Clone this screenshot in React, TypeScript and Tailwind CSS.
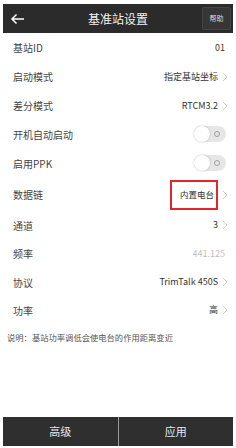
import type { ReactNode } from 'react';

const font = { fontFamily: '"Noto Sans CJK SC", "Noto Sans", sans-serif' };

function Chevron() {
  return (
    <svg width="7" height="10" viewBox="0 0 7 10" className="ml-[3px] shrink-0">
      <path d="M2 1 L6 5 L2 9" fill="none" stroke="#cfcfcf" strokeWidth="1" />
    </svg>
  );
}

function Toggle() {
  return (
    <div className="relative h-[16px] w-[32px] rounded-full bg-[#e6e6e6]">
      <div className="absolute left-0 top-0 h-[16px] w-[16px] rounded-full bg-white shadow-[0_0_2px_rgba(0,0,0,0.25)]" />
      <div className="absolute right-[6px] top-[5px] h-[6px] w-[6px] rounded-full border border-[#a0a0a0]" />
    </div>
  );
}

function Row({
  label,
  h,
  children,
  pr = 'pr-[5px]',
}: {
  label: string;
  h: string;
  children: ReactNode;
  pr?: string;
}) {
  return (
    <div className={`flex items-center justify-between pl-[10px] ${pr} ${h}`}>
      <span className="text-[10px] text-[#444]">{label}</span>
      <div className="flex items-center">{children}</div>
    </div>
  );
}

export default function App() {
  return (
    <div className="flex h-[448px] w-[236px] flex-col bg-white px-[3px] pb-[2px] pt-[4px]" style={font}>
      <div className="flex h-[29px] items-center bg-[#2b2b2b]">
        <div className="flex w-[40px] items-center pl-[7px]">
          <svg width="15" height="12" viewBox="0 0 15 12">
            <path d="M14 6 H2 M6.5 1.5 L2 6 L6.5 10.5" fill="none" stroke="#fff" strokeWidth="1.5" />
          </svg>
        </div>
        <div className="flex-1 text-center text-[12px] text-[#f2f2f2]">基准站设置</div>
        <div className="flex w-[40px] justify-end pr-[2px]">
          <div className="flex h-[23px] w-[29px] items-center justify-center rounded-[2px] border border-[#444] bg-[#363636] text-[7px] text-[#ddd]">
            帮助
          </div>
        </div>
      </div>

      <Row label="基站ID" h="h-[29px]" pr="pr-[8px]">
        <span className="text-[9px] text-[#333]">01</span>
      </Row>
      <Row label="启动模式" h="h-[29px]">
        <span className="text-[9px] text-[#333]">指定基站坐标</span>
        <Chevron />
      </Row>
      <Row label="差分模式" h="h-[29px]">
        <span className="text-[9px] text-[#333]">RTCM3.2</span>
        <Chevron />
      </Row>
      <Row label="开机自动启动" h="h-[28px]" pr="pr-[7px]">
        <Toggle />
      </Row>
      <Row label="启用PPK" h="h-[30px]" pr="pr-[7px]">
        <Toggle />
      </Row>
      <Row label="数据链" h="h-[33px]">
        <span className="flex h-[30px] w-[48px] items-center justify-end border-2 border-[#e3262b] pr-[2px] text-[8.5px] text-[#333]">
          内置电台
        </span>
        <Chevron />
      </Row>
      <Row label="通道" h="h-[28px]">
        <span className="text-[9px] text-[#333]">3</span>
        <Chevron />
      </Row>
      <Row label="频率" h="h-[29px]" pr="pr-[8px]">
        <span className="text-[9px] text-[#c0c0c0]">441.125</span>
      </Row>
      <Row label="协议" h="h-[28px]">
        <span className="text-[9px] text-[#333]">TrimTalk 450S</span>
        <Chevron />
      </Row>
      <Row label="功率" h="h-[28px]">
        <span className="text-[9px] text-[#333]">高</span>
        <Chevron />
      </Row>

      <div className="mt-[8px] pl-[4px] text-[8.3px] leading-[10px] text-[#555]">
        说明：基站功率调低会使电台的作用距离变近
      </div>

      <div className="flex-1" />

      <div className="flex h-[29px] bg-[#2f2f2f] text-[11px] text-[#e8e8e8]">
        <div className="flex flex-1 items-center justify-center">高级</div>
        <div className="w-[1px] bg-[#9a9a9a]" />
        <div className="flex flex-1 items-center justify-center">应用</div>
      </div>
    </div>
  );
}
